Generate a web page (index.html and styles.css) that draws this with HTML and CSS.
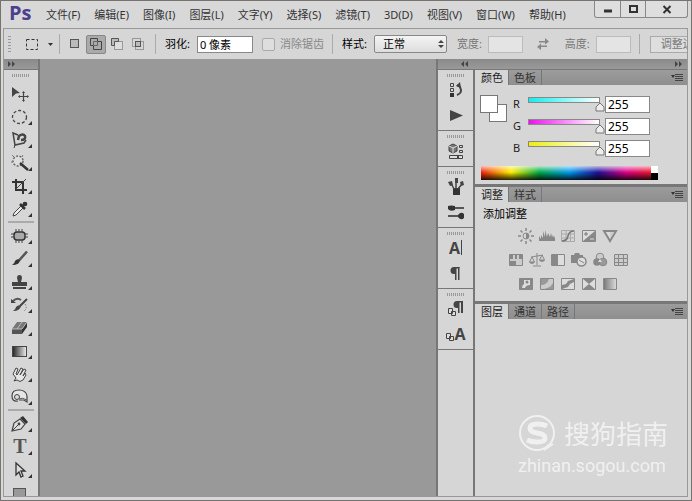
FILE: index.html
```html
<!DOCTYPE html>
<html lang="zh-CN">
<head>
<meta charset="utf-8">
<title>Ps</title>
<link rel="stylesheet" href="styles.css">
</head>
<body>
<div class="window">
  <header class="titlebar">
    <span class="logo">Ps</span>
    <nav class="menu">
      <a href="#">文件(F)</a><a href="#">编辑(E)</a><a href="#">图像(I)</a><a href="#">图层(L)</a><a href="#">文字(Y)</a><a href="#">选择(S)</a><a href="#">滤镜(T)</a><a href="#">3D(D)</a><a href="#">视图(V)</a><a href="#">窗口(W)</a><a href="#">帮助(H)</a>
    </nav>
    <div class="winbtns">
      <button aria-label="最小化"><svg width="10" height="10"><path d="M1 7h8" stroke="#333" stroke-width="3"/></svg></button>
      <button aria-label="最大化"><svg width="10" height="10"><rect x="2" y="2" width="7" height="6" fill="none" stroke="#333" stroke-width="2"/></svg></button>
      <button class="close" aria-label="关闭"><svg width="10" height="10"><path d="M1.500 2l7 7M8.500 2l-7 7" stroke="#333" stroke-width="2"/></svg></button>
    </div>
  </header>

  <div class="frame">
    <div class="options">
      <span class="vgrip"></span>
      <button class="preset" aria-label="矩形选框"><svg width="28" height="14"><rect x="1.500" y="2.500" width="11" height="10" fill="none" stroke="#333" stroke-dasharray="3 2"/><path d="M23 6h5l-2.500 3z" fill="#333"/></svg></button>
      <span class="divider"></span>
      <div class="modes">
        <button aria-label="新选区"><svg width="14" height="14"><rect x="2.500" y="2.500" width="8" height="8" fill="#bbb" stroke="#555"/></svg></button>
        <button class="on" aria-label="添加到选区"><svg width="14" height="14"><path d="M1.500 1.500h7v3h4v8h-8v-4h-3z" fill="#aaa" stroke="#444"/><path d="M4.500 8.500v-4h4M8.500 4.500v4h-4" fill="none" stroke="#666"/></svg></button>
        <button aria-label="从选区减去"><svg width="14" height="14"><rect x="4.500" y="4.500" width="8" height="8" fill="#ddd" stroke="#999"/><path d="M1.500 1.500h7v3h-4v4h-3z" fill="#bbb" stroke="#555"/></svg></button>
        <button aria-label="与选区交叉"><svg width="14" height="14"><rect x="1.500" y="1.500" width="8" height="8" fill="none" stroke="#999"/><rect x="4.500" y="4.500" width="8" height="8" fill="none" stroke="#999"/><rect x="4.500" y="4.500" width="5" height="5" fill="#bbb" stroke="#555"/></svg></button>
      </div>
      <span class="divider"></span>
      <label class="strong" for="feather">羽化:</label>
      <input class="field feather" id="feather" value="0 像素">
      <label class="check"><input type="checkbox" disabled>消除锯齿</label>
      <span class="divider"></span>
      <label class="strong" for="style">样式:</label>
      <span class="selectbox"><select id="style"><option>正常</option></select><svg width="6" height="8"><path d="M0 3h6l-3-3zM0 5h6l-3 3z" fill="#444"/></svg></span>
      <label class="dim first" for="w">宽度:</label>
      <input class="field size" id="w" disabled>
      <button class="swap" aria-label="高度和宽度互换" disabled><svg width="14" height="14"><path d="M3 4h6v-3l4 3.500-4 3V5.500H3zM11 8.500H5v-2L1 10l4 3v-3h6z" fill="#888"/></svg></button>
      <label class="dim" for="h">高度:</label>
      <input class="field size" id="h" disabled>
      <span class="divider"></span>
      <button class="refine" disabled>调整边缘...</button>
    </div>

    <div class="work">
      <aside class="tools">
        <div class="bar"><svg width="8" height="6"><path d="M0 0l3 3-3 3zM4 0l3 3-3 3z" fill="#444"/></svg></div>
        <div class="grip"></div>
        <button class="more0" aria-label="移动"><svg viewBox="0 0 18 18"><path d="M1 2l8 6-4 .6L1 12z" fill="#444"/><path d="M12.500 7v9M8 11.500h9" stroke="#444" stroke-width="1.200"/><path d="M12.500 6l1.500 2h-3zM12.500 17l1.500-2h-3zM7 11.500l2-1.500v3zM18 11.500l-2-1.500v3z" fill="#444"/></svg></button>
        <button aria-label="椭圆选框"><svg viewBox="0 0 18 18"><ellipse cx="8.500" cy="9" rx="7" ry="6.500" fill="none" stroke="#444" stroke-width="1.300" stroke-dasharray="3 2"/></svg></button>
        <button aria-label="磁性套索"><svg viewBox="0 0 18 18"><path d="M7 4L2 2l2 12 9-2 2-3" fill="none" stroke="#444" stroke-width="1.500"/><path d="M7 9l1-4q4-3 6 0 1 4-4 4" fill="none" stroke="#444" stroke-width="2.500"/><path d="M4 14l-1 3" stroke="#444"/></svg></button>
        <button aria-label="魔棒"><svg viewBox="0 0 18 18"><circle cx="7" cy="7" r="5" fill="#ddd" stroke="#666" stroke-width="1.500" stroke-dasharray="2 1.500"/><path d="M9 9l8 7" stroke="#333" stroke-width="2.500"/><path d="M1 1l2 2M12 1l-1 2M0 8h2" stroke="#777"/></svg></button>
        <button aria-label="裁剪"><svg viewBox="0 0 18 18"><path d="M5 2v11h11M1 5h11v12" fill="none" stroke="#333" stroke-width="2"/><path d="M5 12L15 2" stroke="#444"/></svg></button>
        <button aria-label="吸管"><svg viewBox="0 0 18 18"><path d="M2 16l1-3 7-7 2 2-7 7z" fill="#eee" stroke="#444"/><path d="M9 4l5 5M11 7l3-4" stroke="#333" stroke-width="2.500"/><circle cx="14" cy="4" r="2.300" fill="#333"/></svg></button>
        <hr>
        <button aria-label="污点修复"><svg viewBox="0 0 18 18"><rect x="3" y="5" width="11" height="8" rx="3" fill="#aaa" stroke="#333" stroke-width="1.500"/><path d="M5 2v3M8 2v3M11 2v3M5 13v3M8 13v3M11 13v3M0 7h3M0 10h3M14 7h3M14 10h3" stroke="#444"/></svg></button>
        <button aria-label="画笔"><svg viewBox="0 0 18 18"><path d="M16 1.500l-8 9" stroke="#555" stroke-width="2.500"/><path d="M9 10q0 5-8 5 3-2 3-4 2-3 5-1z" fill="#333"/></svg></button>
        <button aria-label="仿制图章"><svg viewBox="0 0 18 18"><path d="M6 5a2.500 3 0 1 1 5 0l-1 4h6v4H1V9h6z" fill="#444"/><path d="M2 15h13" stroke="#444" stroke-width="2"/></svg></button>
        <button aria-label="历史记录画笔"><svg viewBox="0 0 18 18"><path d="M16 3l-7 7" stroke="#444" stroke-width="2"/><path d="M10 10q-1 5-8 5 3-2 3-4 3-3 5-1z" fill="#444"/><path d="M2 5q4-4 8-1" fill="none" stroke="#555" stroke-width="2"/><path d="M0 3v4h5z" fill="#444"/><path d="M14 8q3 4-1 7" fill="none" stroke="#777" stroke-dasharray="1.500 1.500"/></svg></button>
        <button aria-label="橡皮擦"><svg viewBox="0 0 18 18"><path d="M6 3h10l-5 7H1z" fill="#777"/><path d="M1 10h10v5H1z" fill="#555"/><path d="M11 10l5-7v5l-5 7z" fill="#333"/><path d="M1 10h10l5-7M6 10l5-7" fill="none" stroke="#ccc" stroke-width=".8"/></svg></button>
        <button aria-label="渐变"><svg viewBox="0 0 18 18"><defs><linearGradient id="gr"><stop stop-color="#222"/><stop offset="1" stop-color="#eee"/></linearGradient></defs><rect x="1.500" y="4.500" width="14" height="10" fill="url(#gr)" stroke="#444"/></svg></button>
        <button aria-label="涂抹"><svg viewBox="0 0 18 18"><path d="M3 16l2-3-3-4 3-6 2 1-2 5 1 1 4-7 2 1-3 6 4-6 2 1-3 6 2-3 1 2-3 5q-3 3-6 0z" fill="#e6e6e6" stroke="#444"/></svg></button>
        <button aria-label="减淡"><svg viewBox="0 0 18 18"><path d="M7 13Q1 14 1 8t7-6 8 6v6l-3-2H8" fill="#e6e6e6" stroke="#444" stroke-width="1.200"/><circle cx="6" cy="9" r="2.500" fill="#ddd" stroke="#444"/><path d="M8 11q3-2 8 1" fill="none" stroke="#555"/></svg></button>
        <hr>
        <button aria-label="钢笔"><svg viewBox="0 0 18 18"><path d="M1 16l2-8 6-4 5 5-4 5z" fill="#ddd" stroke="#444" stroke-width="1.200"/><path d="M9 3l6 6 2-2-5-6z" fill="#333"/><path d="M1 16l6-6" stroke="#444"/><circle cx="8" cy="9" r="1.400" fill="#444"/></svg></button>
        <button class="type" aria-label="文字">T</button>
        <button aria-label="路径选择"><svg viewBox="0 0 18 18"><path d="M5 2v12l3-3 2 5 2-1-2-5h4z" fill="#ddd" stroke="#333" stroke-width="1.300"/></svg></button>
        <button class="more0" aria-label="矩形"><svg viewBox="0 0 18 18"><rect x="2.500" y="4.500" width="12" height="10" fill="#999" stroke="#555"/></svg></button>
      </aside>

      <main class="canvas"></main>

      <aside class="dock">
        <div class="bar wide"><svg width="8" height="6"><path d="M3 0L0 3l3 3zM7 0L4 3l3 3z" fill="#444"/></svg><svg width="8" height="6"><path d="M0 0l3 3-3 3zM4 0l3 3-3 3z" fill="#444"/></svg></div>
        <div class="dockbody">
          <div class="iconcol">
            <div class="group"><div class="grip"></div>
              <button aria-label="历史记录"><svg viewBox="0 0 18 18"><path d="M3.500 2.500h3v3h-3zM3.500 7.500h3v3h-3z" fill="#ddd" stroke="#444"/><path d="M3 12h4v4H3z" fill="#333"/><path d="M10 14q6-2 3-8l-3-2" fill="none" stroke="#444" stroke-width="2"/><path d="M9 5l4-4 1 6z" fill="#444"/></svg></button>
              <button aria-label="动作"><svg viewBox="0 0 18 18"><path d="M3 4l13 5.500L3 15z" fill="#444"/></svg></button>
            </div>
            <div class="group"><div class="grip"></div>
              <button aria-label="属性"><svg viewBox="0 0 18 18"><path d="M2 4l4-2 4 2v5l-4 2-4-2z" fill="#777" stroke="#444"/><path d="M2 4l4 2 4-2M6 6v5" fill="none" stroke="#ddd"/><path d="M12.500 3.500h3v2h-3zM12.500 8.500h3v2h-3zM2.500 13.500h13v3h-13z" fill="#ddd" stroke="#444"/><path d="M11 13v4" stroke="#444" stroke-width="2"/></svg></button>
            </div>
            <div class="group"><div class="grip"></div>
              <button aria-label="画笔预设"><svg viewBox="0 0 18 18"><path d="M6 10h7v7H6z" fill="#333"/><path d="M9 11V3M7 11L4 5M11 11l4-5" stroke="#444" stroke-width="1.500"/><path d="M8 0h3v5H8zM1 4l4-1 1 4-3 1zM13 4l3-1 1 4-3 1z" fill="#444"/></svg></button>
              <button aria-label="画笔"><svg viewBox="0 0 18 18"><path d="M6 5h11M1 13h11" stroke="#555" stroke-width="2"/><path d="M1 3q3-1 7 0v4q-5 2-7-1zM11 12q3-4 6-1v4q-3 3-6-1z" fill="#333"/></svg></button>
            </div>
            <div class="group"><div class="grip"></div>
              <button class="glyph" aria-label="字符"><b>A</b><i></i></button>
              <button aria-label="段落"><svg viewBox="0 0 18 18"><path d="M13 3H7a3.500 3.500 0 0 0 0 7h1v6h1.500V4.500H11V16h1.500V4z" fill="#444"/></svg></button>
            </div>
            <div class="group"><div class="grip"></div>
              <button aria-label="段落样式"><svg viewBox="0 0 18 18"><path d="M16 1h-6a3.500 3.500 0 0 0 0 7h1v5h1.500V2.500H14V13h2z" fill="#444"/><path d="M1.500 8.500h4v5h-4zM4.500 11.500h4v4h-4z" fill="#ddd" stroke="#444"/></svg></button>
              <button class="glyph sub" aria-label="字符样式"><svg viewBox="0 0 18 18"><path d="M1.500 8.500h4v5h-4zM4.500 11.500h4v4h-4z" fill="#ddd" stroke="#444"/></svg><b>A</b></button>
            </div>
          </div>

          <div class="panels">
            <section class="panel">
              <div class="tabs"><button class="active">颜色</button><button>色板</button><svg class="flyout" width="12" height="8"><path d="M0 1h4l-2 3z" fill="#333"/><path d="M4 .5h8M4 2.500h8M4 4.500h8M4 6.500h8" stroke="#444"/></svg></div>
              <div class="body color">
                <div class="mix">
                  <div class="swatches"><span></span><span></span></div>
                  <div class="channels">
                    <div class="ch"><label for="r">R</label><input class="cyan" type="range" max="255" value="255" aria-label="R"><input class="field" id="r" value="255"></div>
                    <div class="ch"><label for="g">G</label><input class="magenta" type="range" max="255" value="255" aria-label="G"><input class="field" id="g" value="255"></div>
                    <div class="ch"><label for="b">B</label><input class="yellow" type="range" max="255" value="255" aria-label="B"><input class="field" id="b" value="255"></div>
                  </div>
                </div>
                <div class="spectrum"><span></span></div>
              </div>
            </section>
            <section class="panel">
              <div class="tabs"><button class="active">调整</button><button>样式</button><svg class="flyout" width="12" height="8"><path d="M0 1h4l-2 3z" fill="#333"/><path d="M4 .5h8M4 2.500h8M4 4.500h8M4 6.500h8" stroke="#444"/></svg></div>
              <div class="body adjust">
                <h2>添加调整</h2>
                <div class="adj">
                  <svg viewBox="0 0 16 16"><circle cx="8" cy="8" r="3" fill="none" stroke="#888"/><path d="M8 5a3 3 0 0 1 0 6z" fill="#888"/><path d="M8 0v3M8 13v3M0 8h3M13 8h3M2.500 2.500l2 2M11.500 11.500l2 2M13.500 2.500l-2 2M4.500 11.500l-2 2" stroke="#888" stroke-width="1.500"/></svg>
                  <svg viewBox="0 0 16 16"><path d="M0 13V8l2 3V7l2 3V3l2 6V2l2 7 1-4 2 4 1-4 1 4 1-2 1 3 1-2v5z" fill="#888"/></svg>
                  <svg viewBox="0 0 16 16"><path d="M1.500 2.500h13v11h-13zM6 2v12M10.500 2v12M1 6h14M1 10h14" fill="none" stroke="#aaa"/><path d="M2 13q5 0 6-5t6-5" fill="none" stroke="#777" stroke-width="1.500"/></svg>
                  <svg viewBox="0 0 16 16"><path d="M1.500 2.500h13v11h-13z" fill="#ddd" stroke="#888"/><path d="M14 3v10H2z" fill="#888"/><path d="M3 6h4M5 4v4" stroke="#777"/><path d="M9 11h4" stroke="#ddd"/></svg>
                  <svg viewBox="0 0 16 16"><path d="M2 3h12L8 13z" fill="#ddd" stroke="#888" stroke-width="2"/><path d="M8 4h4L8 11z" fill="#ccc"/></svg>
                </div>
                <div class="adj">
                  <svg viewBox="0 0 16 16"><path d="M1.500 2.500h13v11h-13z" fill="#ccc" stroke="#888"/><path d="M2 3h3v4H2zM7 3h2v4H7zM11 3h3v4h-3zM2 9h6v4H2z" fill="#888"/></svg>
                  <svg viewBox="0 0 16 16"><path d="M8 1v12M4 14h8M2 5l12-2M3 5l-2.500 5h5zM13 3l-2.500 5h5z" fill="none" stroke="#888"/><path d="M0 10h6q-3 4-6 0M10 8h6q-3 4-6 0" fill="#888"/></svg>
                  <svg viewBox="0 0 16 16"><path d="M1.500 2.500h13v11h-13z" fill="#ddd" stroke="#888"/><path d="M2 3h6v10H2z" fill="#888"/></svg>
                  <svg viewBox="0 0 16 16"><path d="M0 3h3l1-2h4l1 2h3v8H0z" fill="#888"/><circle cx="10.500" cy="9.500" r="4.500" fill="#ddd" stroke="#888" stroke-width="1.500"/><path d="M8 8l5 3" stroke="#888"/></svg>
                  <svg viewBox="0 0 16 16"><circle cx="8" cy="5" r="3.800" fill="#ccc" stroke="#888"/><circle cx="5" cy="10" r="3.800" fill="#888"/><circle cx="11" cy="10" r="3.800" fill="#999" stroke="#888"/><path d="M8 7l2 3H6z" fill="#ddd"/></svg>
                  <svg viewBox="0 0 16 16"><path d="M1.500 2.500h13v11h-13z" fill="#ccc" stroke="#888"/><path d="M5.500 2v12M10.500 2v12M1 6.500h14M1 10.500h14" stroke="#888"/></svg>
                </div>
                <div class="adj">
                  <svg viewBox="0 0 16 16"><path d="M1.500 2.500h13v11h-13z" fill="#888" stroke="#888"/><path d="M4 12q0-3 2-4V4h6v5q-4 0-5 3z" fill="#ddd"/><circle cx="9" cy="6" r="1.500" fill="#888"/></svg>
                  <svg viewBox="0 0 16 16"><path d="M1.500 2.500h13v11h-13z" fill="#ccc" stroke="#888"/><path d="M2 9q6 0 8-6h-8zM2 13q9 0 12-6v6z" fill="#999"/></svg>
                  <svg viewBox="0 0 16 16"><path d="M1.500 2.500h13v11h-13z" fill="#ddd" stroke="#888"/><path d="M2 9l4-1 2-3 3-1 3-1v3l-4 2-2 3-6 2z" fill="#888"/></svg>
                  <svg viewBox="0 0 16 16"><path d="M1.500 2.500h13v11h-13z" fill="#ddd" stroke="#888"/><path d="M2 3h12L8 8zM2 13h12L8 8z" fill="#888"/></svg>
                  <svg viewBox="0 0 16 16"><defs><linearGradient id="gm"><stop stop-color="#777"/><stop offset="1" stop-color="#ddd"/></linearGradient></defs><path d="M1.500 2.500h13v11h-13z" fill="url(#gm)" stroke="#888"/></svg>
                </div>
              </div>
            </section>
            <section class="panel grow">
              <div class="tabs"><button class="active">图层</button><button>通道</button><button>路径</button><svg class="flyout" width="12" height="8"><path d="M0 1h4l-2 3z" fill="#333"/><path d="M4 .5h8M4 2.500h8M4 4.500h8M4 6.500h8" stroke="#444"/></svg></div>
              <div class="body"></div>
            </section>
          </div>
        </div>
      </aside>
    </div>
  </div>
  <div class="watermark">
    <div class="brand"><svg width="38" height="38" viewBox="0 0 38 38"><circle cx="19" cy="19" r="17" fill="none" stroke="#fff" stroke-width="2"/><path d="M29 12q-4-2-10-2-7 0-7 4t7 5q8 1 8 5t-8 4q-6 0-10-2" fill="none" stroke="#fff" stroke-width="5"/><path d="M26 36l9-6" stroke="#fff" stroke-width="2"/></svg><span>搜狗指南</span></div>
    <div class="url">zhinan.sogou.com</div>
  </div>
</div>
</body>
</html>
```
FILE: styles.css
```css
* { box-sizing: border-box; }
body {
  margin: 0;
  font: 11px/14px "Noto Sans", "Noto Sans CJK SC", sans-serif;
  color: #222;
  background: #d6d6d6;
}
button, input, select { font: inherit; color: inherit; margin: 0; padding: 0; }
button { border: 0; background: none; display: flex; align-items: center; justify-content: center; }
svg { display: block; flex: none; }

.window {
  position: relative;
  display: flex;
  flex-direction: column;
  height: 100vh;
  padding: 0 3px 3px 2px;
  border: 1px solid #77716f;
  background: #d8d8d8;
}
.titlebar { display: flex; align-items: center; height: 27px; padding-left: 6px; flex: none; }
.logo { width: 37px; font: bold 20px/24px "Open Sans", sans-serif; color: #4b3f8f; margin-bottom: 3px; }
.menu { display: flex; gap: 14px; flex: 1; white-space: nowrap; }
.menu a { color: #333; text-decoration: none; }
.winbtns {
  display: flex;
  align-self: flex-start;
  height: 17px;
  border: 1px solid #888;
  border-top: 0;
  border-radius: 0 0 3px 3px;
  background: #dedede;
}
.winbtns button { width: 25px; }
.winbtns button + button { border-left: 1px solid #888; }
.winbtns .close { width: 42px; }

.frame { flex: 1; min-height: 0; display: flex; flex-direction: column; border: 1px solid #999; }
.options {
  display: flex;
  align-items: center;
  height: 30px;
  padding-left: 4px;
  overflow: hidden;
  flex: none;
  white-space: nowrap;
  background: #d6d6d6;
}
.options > * { flex: none; }
.vgrip { width: 3px; height: 17px; background: repeating-linear-gradient(#999 0 1px, transparent 1px 3px); }
.preset { width: 30px; margin-left: 13px; }
.divider { width: 1px; height: 20px; background: #aaa; margin: 0 5px; }
.modes { display: flex; gap: 1px; margin-right: 2px; }
.modes button { width: 20px; height: 19px; border: 1px solid transparent; }
.modes .on { border-color: #888; border-radius: 2px; background: #aaa; }
.strong { color: #000; margin: 0 7px 0 4px; }
.field { height: 17px; border: 1px solid #888; border-radius: 0; background: #fff; color: #000; padding: 0 2px; }
.feather { width: 56px; }
.check { display: flex; align-items: center; gap: 5px; margin: 0 3px 0 9px; color: #888; }
.check input { appearance: none; width: 13px; height: 13px; border: 1px solid #aaa; border-radius: 2px; background: #dedede; }
.selectbox { position: relative; width: 73px; }
.selectbox select { appearance: none; display: block; width: 100%; height: 18px; padding: 0 8px; border: 1px solid #888; border-radius: 2px; background: linear-gradient(#f4f4f4, #ddd); color: #000; }
.selectbox svg { position: absolute; right: 3px; top: 5px; pointer-events: none; }
.dim { color: #777; margin-right: 6px; }
.dim.first { margin-left: 10px; }
.size { width: 35px; border-color: #bbb; background: #e4e4e4; }
.swap { margin: 0 15px 0 13px; }
.size + .divider { margin: 0 10px 0 8px; }
.refine { height: 17px; padding: 0 10px; border: 1px solid #aaa; background: #dedede; color: #777; }

.work { flex: 1; min-height: 0; display: flex; }
.bar { height: 11px; padding: 2px 4px; background: linear-gradient(#8a8a8a, #999); border-bottom: 1px solid #777; display: flex; }
.bar.wide { padding-left: 23px; justify-content: space-between; }
.grip { width: 18px; height: 3px; margin: 0 auto; background: repeating-linear-gradient(90deg, #999 0 1px, transparent 1px 2px); }

.tools { width: 36px; flex: none; overflow: hidden; border-right: 2px solid #777; background: #d6d6d6; }
.tools .grip { margin: 4px auto 5px 8px; }
.tools button { position: relative; width: 32px; height: 23px; }
.tools button svg { width: 18px; height: 18px; }
.tools button::after { content: ""; position: absolute; right: 4px; bottom: 3px; border: 2px solid transparent; border-right-color: #333; border-bottom-color: #333; }
.tools .more0::after { display: none; }
.tools hr { width: 26px; height: 2px; margin: 1px 0 1px 4px; border: 0; background: #aaa; }
.tools .type { font: 20px/23px "Liberation Serif", serif; font-weight: bold; color: #555; }

.canvas { flex: 1; background: #999; }

.dock { display: flex; flex-direction: column; width: 251px; flex: none; border-left: 2px solid #777; }
.dockbody { display: flex; flex: 1; min-height: 0; }
.iconcol { width: 37px; border-right: 2px solid #777; background: #d6d6d6; }
.group { padding: 4px 0 3px; border-bottom: 1px solid #777; }
.group button { width: 100%; height: 25px; }
.group svg { width: 18px; height: 18px; }
.glyph { color: #444; font: 16px/20px "Open Sans", sans-serif; }
.glyph i { width: 1px; height: 15px; margin-left: 1px; background: #444; }
.group .glyph.sub svg { width: 18px; margin-right: -9px; }
.glyph.sub { align-items: center; }

.panels { flex: 1; display: flex; flex-direction: column; gap: 3px; background: #777; }
.panel { background: #d6d6d6; }
.panel.grow { flex: 1; display: flex; flex-direction: column; }
.tabs { display: flex; align-items: center; height: 15px; background: linear-gradient(#9c9c9c, #8e8e8e); flex: none; }
.tabs button { height: 15px; padding: 0 5px; border-right: 1px solid #777; color: #333; white-space: nowrap; }
.tabs .active { padding-left: 6px; background: #d6d6d6; color: #222; }
.flyout { margin: 0 4px 0 auto; }

.color { height: 99px; padding: 8px 5px 0; }
.mix { display: flex; }
.swatches { position: relative; width: 33px; height: 28px; margin-top: 2px; }
.swatches span { position: absolute; width: 18px; height: 18px; border: 1px solid #777; background: #fff; left: 9px; top: 9px; }
.swatches span:first-child { left: 0; top: 0; z-index: 1; }
.ch { display: flex; align-items: center; height: 22px; }
.ch label { width: 10px; }
.ch .field { width: 45px; font-size: 12px; }
.ch input[type="range"] {
  appearance: none;
  width: 82px;
  height: 16px;
  background-color: transparent;
  background-repeat: no-repeat;
  background-size: calc(100% - 12px) 4px, calc(100% - 10px) 6px;
  background-position: 6px 2px, 5px 1px;
}
.cyan { background-image: linear-gradient(90deg, #1ee, #fff), linear-gradient(#888, #888); }
.magenta { background-image: linear-gradient(90deg, #e1e, #fff), linear-gradient(#888, #888); }
.yellow { background-image: linear-gradient(90deg, #ee1, #fff), linear-gradient(#888, #888); }
.ch input[type="range"]::-webkit-slider-thumb {
  appearance: none;
  width: 10px;
  height: 10px;
  margin-top: 6px;
  background: url("data:image/svg+xml,%3Csvg xmlns='http://www.w3.org/2000/svg' width='10' height='10'%3E%3Cpath d='M5 1l4 4v4H1V5z' fill='%23eee' stroke='%23777'/%3E%3C/svg%3E");
}
.spectrum {
  display: flex;
  justify-content: flex-end;
  width: 177px;
  height: 14px;
  margin: 7px 0 0 1px;
  background: linear-gradient(rgba(255,255,255,.7), transparent 45%, rgba(0,0,0,.85)), linear-gradient(90deg, #e21, #fe0 17%, #0a4 33%, #09e 50%, #219 66%, #d08 82%, #e21);
}
.spectrum span { width: 7px; background: linear-gradient(#fff 50%, #000 50%); }

.adjust { height: 99px; padding: 5px 8px 0; }
.adjust h2 { margin: 0 0 7px; font-size: 11px; line-height: 14px; font-weight: normal; color: #000; }
.adj { display: flex; justify-content: center; gap: 5px; height: 24px; margin-right: 26px; }
.adj svg { width: 16px; height: 16px; }

.watermark { position: absolute; right: 23px; bottom: 22px; color: #fff; opacity: .65; }
.brand { display: flex; align-items: center; gap: 8px; font: 26px/38px "Noto Sans CJK SC", sans-serif; }
.url { font: 18px/24px Roboto, sans-serif; margin-top: 2px; }
```
